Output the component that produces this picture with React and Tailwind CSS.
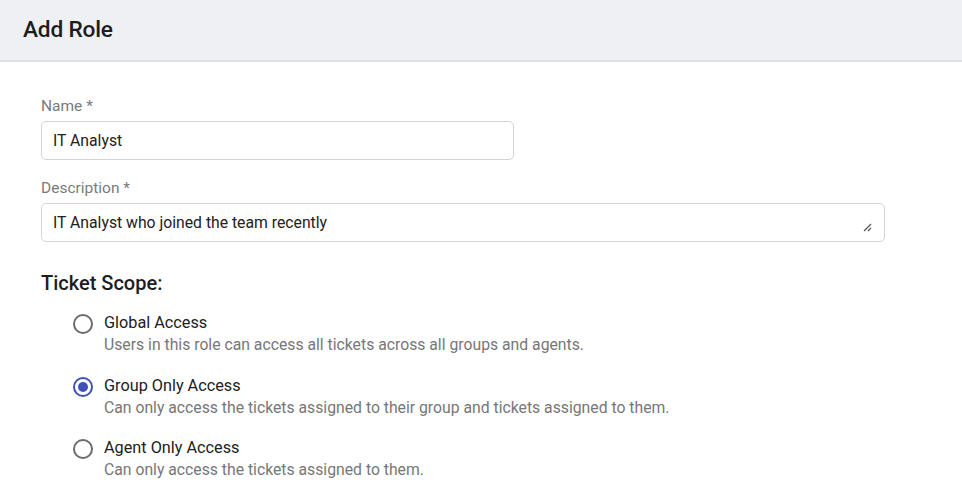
import { useState } from "react";

const SCOPES = [
  {
    id: "global",
    title: "Global Access",
    desc: "Users in this role can access all tickets across all groups and agents.",
  },
  {
    id: "group",
    title: "Group Only Access",
    desc: "Can only access the tickets assigned to their group and tickets assigned to them.",
  },
  {
    id: "agent",
    title: "Agent Only Access",
    desc: "Can only access the tickets assigned to them.",
  },
];

function Radio({ checked }) {
  return (
    <span
      className={
        "flex h-[20px] w-[20px] shrink-0 items-center justify-center rounded-full border-2 " +
        (checked ? "border-[#3f51b5]" : "border-[#6b6b6b]")
      }
    >
      {checked && <span className="h-[10px] w-[10px] rounded-full bg-[#3f51b5]" />}
    </span>
  );
}

export default function App() {
  const [scope, setScope] = useState("group");

  return (
    <div className="min-h-[492px] bg-white font-['Roboto',sans-serif] text-[#212121]">
      <div className="flex h-[62px] items-center border-b-2 border-[#dfe1e6] bg-[#eff0f4] px-[23px]">
        <h1 className="text-[22.7px] font-medium tracking-[-0.2px] text-[#1d1d1f]">Add Role</h1>
      </div>

      <div className="px-[41px] pt-[34px]">
        <label className="block text-[15.5px] leading-[20px] text-[#7a7a7a]">Name *</label>
        <div className="mt-[5px] flex h-[39px] w-[473px] items-center rounded-[5px] border border-[#d4d4d4] px-[11px] text-[15.75px]">
          IT Analyst
        </div>

        <label className="mt-[18px] block text-[15.5px] leading-[20px] text-[#7a7a7a]">Description *</label>
        <div className="relative mt-[5px] flex h-[39px] w-[844px] items-center rounded-[5px] border border-[#d4d4d4] px-[11px] text-[15.75px]">
          IT Analyst who joined the team recently
          <svg
            className="absolute right-[12px] bottom-[9px]"
            width="9"
            height="9"
            viewBox="0 0 9 9"
          >
            <path d="M8 1 L1 8 M8 5 L5 8" stroke="#555" strokeWidth="1.2" />
          </svg>
        </div>

        <h2 className="mt-[29px] text-[20px] font-medium leading-[24px] text-[#1d1d1f]">Ticket Scope:</h2>

        <div className="mt-[18px] flex flex-col gap-[20.5px] pl-[32px]">
          {SCOPES.map((s) => (
            <button
              key={s.id}
              type="button"
              onClick={() => setScope(s.id)}
              className="flex gap-[11px] text-left"
            >
              <div className="pt-[1px]">
                <Radio checked={scope === s.id} />
              </div>
              <div>
                <div className="text-[16.25px] leading-[20px] text-[#212121]">{s.title}</div>
                <div className="mt-[2px] text-[15.75px] leading-[20px] text-[#777777]">{s.desc}</div>
              </div>
            </button>
          ))}
        </div>
      </div>
    </div>
  );
}
